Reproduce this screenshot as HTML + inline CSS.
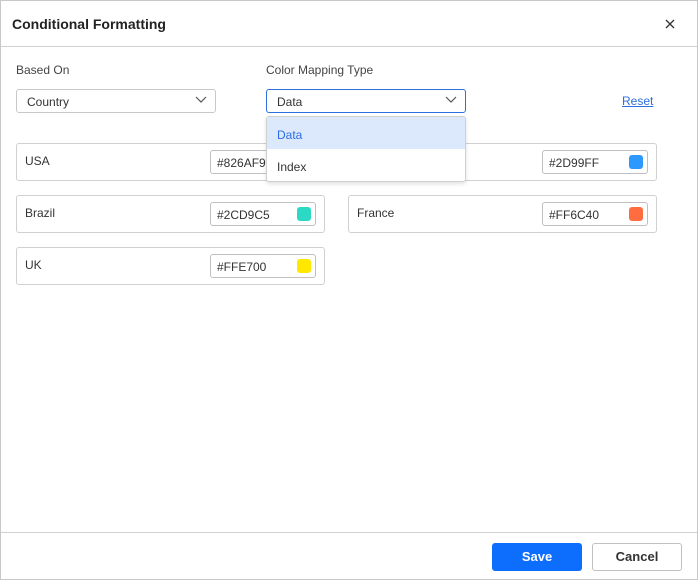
<!DOCTYPE html>
<html><head><style>
*{box-sizing:border-box;margin:0;padding:0}
body{width:698px;height:580px;background:#fff;font-family:"Liberation Sans",sans-serif;position:relative;overflow:hidden;color:#333}
.frame{position:absolute;left:0;top:0;width:698px;height:580px;border:1px solid #c8c8c8}
.abs{position:absolute}
.title{left:12px;top:16px;font-size:14px;font-weight:bold;color:#222}
.x{left:665px;top:19px}
.hl{left:1px;width:696px;height:1px;background:#d0d0d0}
.lbl{font-size:12px;color:#444}
.dd{height:24px;border:1px solid #c8c8c8;border-radius:3px;font-size:12px;padding:5px 10px;color:#333}
.chev{position:absolute;right:8px;top:6px}
.card{height:38px;border:1px solid #d0d0d0;border-radius:3px;width:309px}
.card .n{position:absolute;left:8px;top:10px;font-size:12px;color:#333}
.inp{position:absolute;left:193px;top:6px;width:106px;height:24px;border:1px solid #c0c0c0;border-radius:3px;font-size:12px;padding:5px 6px;color:#333}
.sw{position:absolute;right:4px;top:4px;width:14px;height:14px;border-radius:3px}
.btn{top:543px;height:28px;width:90px;border-radius:3px;font-size:13px;font-weight:bold;text-align:center;line-height:26px}
</style></head><body>
<div class="frame"></div>
<div class="abs title">Conditional Formatting</div>
<svg class="abs x" width="10" height="10" viewBox="0 0 10 10"><path d="M1 1l8 8M9 1l-8 8" stroke="#333" stroke-width="1.3"/></svg>
<div class="abs hl" style="top:46px"></div>
<div class="abs lbl" style="left:16px;top:63px">Based On</div>
<div class="abs lbl" style="left:266px;top:63px">Color Mapping Type</div>
<div class="abs dd" style="left:16px;top:89px;width:200px">Country<svg class="chev" width="12" height="8" viewBox="0 0 12 8"><path d="M1 1l5 5 5-5" fill="none" stroke="#555" stroke-width="1.2"/></svg></div>
<div class="abs dd" style="left:266px;top:89px;width:200px;border-color:#2d6fe0">Data<svg class="chev" width="12" height="8" viewBox="0 0 12 8"><path d="M1 1l5 5 5-5" fill="none" stroke="#555" stroke-width="1.2"/></svg></div>
<div class="abs" style="left:622px;top:94px;font-size:12px;color:#2d6fe0;text-decoration:underline">Reset</div>

<div class="abs card" style="left:16px;top:143px"><span class="n">USA</span><div class="inp">#826AF9<span class="sw" style="background:#826AF9"></span></div></div>
<div class="abs card" style="left:348px;top:143px"><span class="n">Germany</span><div class="inp">#2D99FF<span class="sw" style="background:#2D99FF"></span></div></div>
<div class="abs card" style="left:16px;top:195px"><span class="n">Brazil</span><div class="inp">#2CD9C5<span class="sw" style="background:#2CD9C5"></span></div></div>
<div class="abs card" style="left:348px;top:195px"><span class="n">France</span><div class="inp">#FF6C40<span class="sw" style="background:#FF6C40"></span></div></div>
<div class="abs card" style="left:16px;top:247px"><span class="n">UK</span><div class="inp">#FFE700<span class="sw" style="background:#FFE700"></span></div></div>

<div class="abs" style="left:266px;top:116px;width:200px;height:66px;border:1px solid #d0d0d0;border-radius:3px;background:#fff;box-shadow:0 2px 4px rgba(0,0,0,.12);overflow:hidden">
<div style="height:32px;background:#dce8fc;color:#2d6fe0;font-size:12px;padding:11px 10px">Data</div>
<div style="height:32px;font-size:12px;padding:11px 10px;color:#333">Index</div>
</div>

<div class="abs hl" style="top:532px"></div>
<div class="abs btn" style="left:492px;background:#0d6efd;color:#fff;border:1px solid #0d6efd">Save</div>
<div class="abs btn" style="left:592px;background:#fff;color:#333;border:1px solid #c0c0c0">Cancel</div>
</body></html>
